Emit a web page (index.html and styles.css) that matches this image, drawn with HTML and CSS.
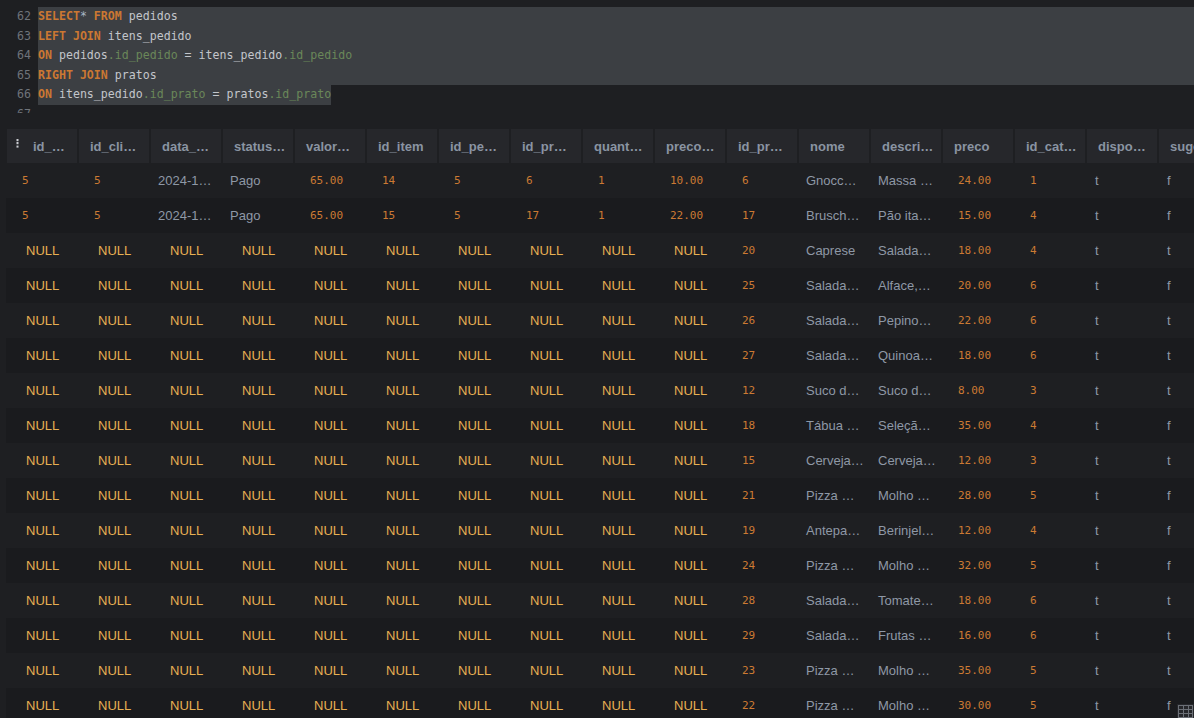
FILE: index.html
```html
<!DOCTYPE html>
<html lang="pt">
<head>
<meta charset="utf-8">
<title>Consulta</title>
<link rel="stylesheet" href="styles.css">
</head>
<body>
<div class="app">
  <section class="editor">
    <div class="lines">
      <div class="line"><span class="ln">61</span><span class="code"></span></div>
      <div class="line"><span class="ln">62</span><span class="code sel"><b class="kw">SELECT</b><span class="op">*</span> <b class="kw">FROM</b> pedidos</span></div>
      <div class="line"><span class="ln">63</span><span class="code sel"><b class="kw">LEFT JOIN</b> itens_pedido</span></div>
      <div class="line"><span class="ln">64</span><span class="code sel"><b class="kw">ON</b> pedidos<span class="fld">.id_pedido</span> = itens_pedido<span class="fld">.id_pedido</span></span></div>
      <div class="line"><span class="ln">65</span><span class="code sel"><b class="kw">RIGHT JOIN</b> pratos</span></div>
      <div class="line"><span class="ln">66</span><span class="code"><span class="sel-part"><b class="kw">ON</b> itens_pedido<span class="fld">.id_prato</span> = pratos<span class="fld">.id_prato</span></span></span></div>
      <div class="line"><span class="ln">67</span><span class="code"></span></div>
    </div>
  </section>

  <section class="results">
    <div class="table">
      <div class="thead">
        <div class="th first"><svg class="menu-ico" width="3" height="9" viewBox="0 0 3 9"><rect x="0.5" y="0" width="2" height="2.2" fill="#c9ccd1"/><rect x="0.5" y="3" width="2" height="2.2" fill="#c9ccd1"/><rect x="0.5" y="6.6" width="2" height="2" fill="#c9ccd1"/></svg><span>id_…</span></div>
        <div class="th"><span>id_cli…</span></div>
        <div class="th"><span>data_…</span></div>
        <div class="th"><span>status…</span></div>
        <div class="th"><span>valor…</span></div>
        <div class="th"><span>id_item</span></div>
        <div class="th"><span>id_pe…</span></div>
        <div class="th"><span>id_pr…</span></div>
        <div class="th"><span>quant…</span></div>
        <div class="th"><span>preco…</span></div>
        <div class="th"><span>id_pr…</span></div>
        <div class="th"><span>nome</span></div>
        <div class="th"><span>descri…</span></div>
        <div class="th"><span>preco</span></div>
        <div class="th"><span>id_cat…</span></div>
        <div class="th"><span>dispo…</span></div>
        <div class="th"><span>sugestao</span></div>
      </div>
      <div id="tbody" class="tbody"></div>
    </div>
    <div class="corner-ico">
      <svg width="15" height="13" viewBox="0 0 15 13"><rect x="0.5" y="0.5" width="14" height="12" fill="none" stroke="#6b6f76"/><line x1="0.5" y1="4.5" x2="14.5" y2="4.5" stroke="#6b6f76"/><line x1="0.5" y1="8.5" x2="14.5" y2="8.5" stroke="#6b6f76"/><line x1="5.5" y1="0.5" x2="5.5" y2="12.5" stroke="#6b6f76"/><line x1="10.5" y1="0.5" x2="10.5" y2="12.5" stroke="#6b6f76"/></svg>
    </div>
  </section>
</div>
<script src="app.js"></script>
</body>
</html>
```

FILE: styles.css
```css
* { box-sizing: border-box; }
html, body { margin: 0; padding: 0; }
body {
  background: #1e1f22;
  width: 1194px;
  height: 718px;
  overflow: hidden;
  font-family: "Liberation Sans", Arial, sans-serif;
}
.app { display: flex; flex-direction: column; height: 718px; }

/* editor */
.editor {
  height: 113px;
  flex: none;
  overflow: hidden;
  font-family: "DejaVu Sans Mono", "Liberation Mono", monospace;
  font-size: 11.6px;
  color: #c3c6cb;
}
.lines { margin-top: -12.6px; }
.line { display: flex; height: 19.6px; line-height: 19.6px; white-space: pre; }
.ln { width: 38px; flex: none; text-align: right; padding-right: 7px; color: #6f737a; }
.code { flex: 1; }
.sel { background: #3c3f43; }
.sel-part { background: #3c3f43; display: inline-block; }
.kw { color: #cc7832; font-weight: bold; }
.op { color: #a9b7c6; }
.fld { color: #6a8759; }

/* results */
.results { position: relative; flex: 1; overflow: hidden; padding: 16px 0 0 6px; }
.table { width: max-content; }
.thead { display: flex; height: 34px; }
.th {
  width: 70px;
  margin: 0 1px;
  flex: none;
  background: #26272b;
  color: #8a94a2;
  font-weight: bold;
  font-size: 13px;
  display: flex;
  align-items: center;
  padding-left: 11px;
  white-space: nowrap;
  overflow: hidden;
}
.th.first { padding-left: 9px; gap: 14px; }
.menu-ico { flex: none; margin-top: -5px; }

.tr { display: flex; height: 35px; align-items: center; }
.tr:nth-child(even) { background: #1a1b1e; }
.td {
  width: 72px;
  flex: none;
  white-space: nowrap;
  overflow: hidden;
  text-overflow: ellipsis;
  font-size: 13px;
  color: #8e98a6;
  padding-left: 8px;
}
.td.num {
  font-family: "DejaVu Sans Mono", "Liberation Mono", monospace;
  font-size: 11px;
  color: #cc7a33;
  padding-left: 16px;
}
.td.null { color: #e8b052; padding-left: 20px; }
.td.bool { padding-left: 9px; }

.corner-ico {
  position: absolute;
  right: 0;
  bottom: 0;
  width: 17px;
  height: 14px;
  background: #26272b;
  display: flex;
  align-items: flex-end;
  justify-content: flex-end;
  padding: 1px 1px 0 0;
}
.corner-ico svg { display: block; }
```

FILE: app.js
```js
const rows = [
  ["5","5","2024-1…","Pago","65.00","14","5","6","1","10.00","6","Gnocc…","Massa …","24.00","1","t","f"],
  ["5","5","2024-1…","Pago","65.00","15","5","17","1","22.00","17","Brusch…","Pão ita…","15.00","4","t","f"],
  ["20","Caprese","Salada…","18.00","4","t","t"],
  ["25","Salada…","Alface,…","20.00","6","t","f"],
  ["26","Salada…","Pepino…","22.00","6","t","t"],
  ["27","Salada…","Quinoa…","18.00","6","t","t"],
  ["12","Suco d…","Suco d…","8.00","3","t","t"],
  ["18","Tábua …","Seleçã…","35.00","4","t","f"],
  ["15","Cerveja…","Cerveja…","12.00","3","t","t"],
  ["21","Pizza …","Molho …","28.00","5","t","f"],
  ["19","Antepa…","Berinjel…","12.00","4","t","f"],
  ["24","Pizza …","Molho …","32.00","5","t","f"],
  ["28","Salada…","Tomate…","18.00","6","t","t"],
  ["29","Salada…","Frutas …","16.00","6","t","t"],
  ["23","Pizza …","Molho …","35.00","5","t","t"],
  ["22","Pizza …","Molho …","30.00","5","t","f"]
];
// column kinds: n = number, s = text, b = boolean
const kinds = ["n","n","s","s","n","n","n","n","n","n","n","s","s","n","n","b","b"];
const tbody = document.getElementById("tbody");
rows.forEach(r => {
  const full = r.length === 17 ? r : Array(10).fill(null).concat(r);
  const tr = document.createElement("div");
  tr.className = "tr";
  full.forEach((v, i) => {
    const td = document.createElement("div");
    if (v === null) {
      td.className = "td null";
      td.textContent = "NULL";
    } else {
      const k = kinds[i];
      td.className = "td" + (k === "n" ? " num" : k === "b" ? " bool" : "");
      td.textContent = v;
    }
    tr.appendChild(td);
  });
  tbody.appendChild(tr);
});
```
